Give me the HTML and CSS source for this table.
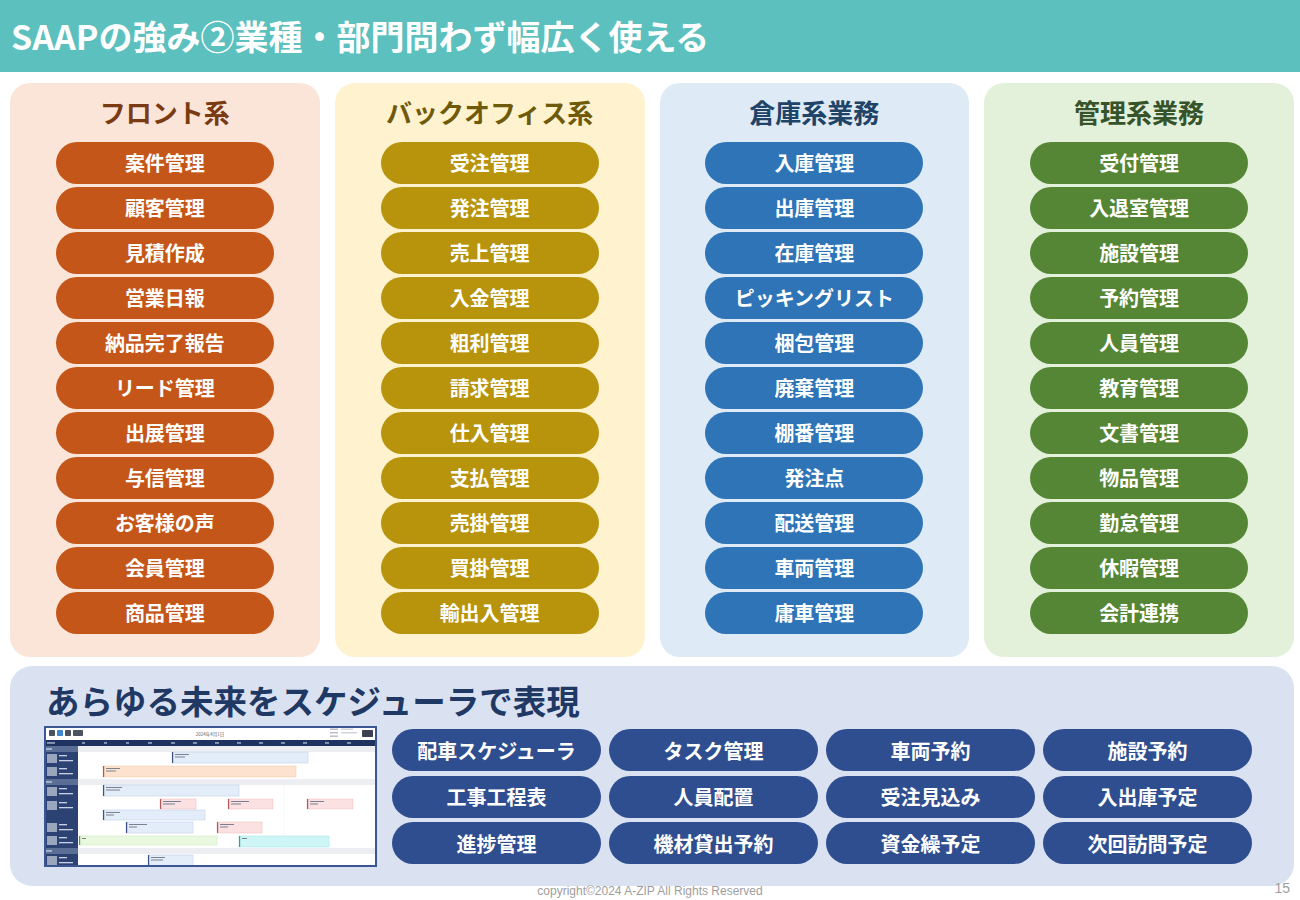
FILE: index.html
```
<!DOCTYPE html>
<html lang="ja">
<head>
<meta charset="utf-8">
<title>SAAPの強み②業種・部門問わず幅広く使える</title>
<link rel="stylesheet" href="styles.css">
</head>
<body>
<div class="page">
  <header class="header"><h1 class="header-title">SAAPの強み②業種・部門問わず幅広く使える</h1></header>

  <section class="columns">
    <div class="col col-front">
      <h2 class="col-title">フロント系</h2>
      <ul class="pills">
        <li class="pill">案件管理</li><li class="pill">顧客管理</li><li class="pill">見積作成</li><li class="pill">営業日報</li><li class="pill">納品完了報告</li><li class="pill">リード管理</li><li class="pill">出展管理</li><li class="pill">与信管理</li><li class="pill">お客様の声</li><li class="pill">会員管理</li><li class="pill">商品管理</li>
      </ul>
    </div>
    <div class="col col-back">
      <h2 class="col-title">バックオフィス系</h2>
      <ul class="pills">
        <li class="pill">受注管理</li><li class="pill">発注管理</li><li class="pill">売上管理</li><li class="pill">入金管理</li><li class="pill">粗利管理</li><li class="pill">請求管理</li><li class="pill">仕入管理</li><li class="pill">支払管理</li><li class="pill">売掛管理</li><li class="pill">買掛管理</li><li class="pill">輸出入管理</li>
      </ul>
    </div>
    <div class="col col-ware">
      <h2 class="col-title">倉庫系業務</h2>
      <ul class="pills">
        <li class="pill">入庫管理</li><li class="pill">出庫管理</li><li class="pill">在庫管理</li><li class="pill">ピッキングリスト</li><li class="pill">梱包管理</li><li class="pill">廃棄管理</li><li class="pill">棚番管理</li><li class="pill">発注点</li><li class="pill">配送管理</li><li class="pill">車両管理</li><li class="pill">庸車管理</li>
      </ul>
    </div>
    <div class="col col-admin">
      <h2 class="col-title">管理系業務</h2>
      <ul class="pills">
        <li class="pill">受付管理</li><li class="pill">入退室管理</li><li class="pill">施設管理</li><li class="pill">予約管理</li><li class="pill">人員管理</li><li class="pill">教育管理</li><li class="pill">文書管理</li><li class="pill">物品管理</li><li class="pill">勤怠管理</li><li class="pill">休暇管理</li><li class="pill">会計連携</li>
      </ul>
    </div>
  </section>

  <section class="sched">
    <h2 class="sched-title">あらゆる未来をスケジューラで表現</h2>
    <div class="sched-row">
      <svg class="shot" width="333" height="141" viewBox="0 0 333 141">
        <rect x="0" y="0" width="333" height="141" fill="#ffffff"/>
        <!-- toolbar -->
        <rect x="5" y="4" width="6" height="6" rx="0.8" fill="#4b5262"/>
        <rect x="13" y="4" width="6" height="6" rx="0.8" fill="#3d86d6"/>
        <rect x="21" y="4" width="6" height="6" rx="0.8" fill="#4b5262"/>
        <rect x="29" y="4" width="10" height="6" rx="0.8" fill="#4b5262"/>
        <text x="166" y="9.5" font-size="4.5" text-anchor="middle" fill="#606060" font-family="Noto Sans CJK JP, sans-serif">2024年4月1日</text>
        <rect x="286" y="2.5" width="8" height="1.4" fill="#b9bcc4"/>
        <rect x="297" y="2.5" width="12" height="1.4" fill="#cfd2d8"/>
        <rect x="286" y="6" width="8" height="1.4" fill="#b9bcc4"/>
        <rect x="297" y="6" width="16" height="1.4" fill="#cfd2d8"/>
        <rect x="286" y="9.5" width="8" height="1.4" fill="#b9bcc4"/>
        <rect x="318" y="4" width="11" height="7" rx="0.8" fill="#3b4150"/>
        <!-- time header -->
        <rect x="0" y="14" width="333" height="6" fill="#1e3360"/>
        <g fill="#b9c4dc">
          <rect x="3" y="16.3" width="8" height="1.3"/>
          <rect x="38" y="16.3" width="3" height="1.3"/><rect x="60" y="16.3" width="3" height="1.3"/><rect x="82" y="16.3" width="3" height="1.3"/><rect x="104" y="16.3" width="4" height="1.3"/><rect x="127" y="16.3" width="4" height="1.3"/><rect x="149" y="16.3" width="4" height="1.3"/><rect x="171" y="16.3" width="4" height="1.3"/><rect x="193" y="16.3" width="4" height="1.3"/><rect x="215" y="16.3" width="4" height="1.3"/><rect x="237" y="16.3" width="4" height="1.3"/><rect x="259" y="16.3" width="4" height="1.3"/><rect x="281" y="16.3" width="4" height="1.3"/><rect x="303" y="16.3" width="4" height="1.3"/>
        </g>
        <!-- group rows -->
        <rect x="34" y="20" width="299" height="6" fill="#eceef2"/>
        <rect x="34" y="53" width="299" height="6" fill="#eceef2"/>
        <rect x="34" y="122" width="299" height="6" fill="#eceef2"/>
        <!-- grid line -->
        <line x1="240" y1="59" x2="240" y2="122" stroke="#e4e6ea" stroke-width="0.5" stroke-dasharray="1.5 1"/>
        <!-- left column -->
        <rect x="0" y="20" width="34" height="121" fill="#2b4273"/>
        <rect x="0" y="20" width="34" height="6" fill="#5a6e96"/>
        <rect x="0" y="53" width="34" height="6" fill="#5a6e96"/>
        <rect x="0" y="122" width="34" height="6" fill="#5a6e96"/>
        <g fill="#9aa6be">
          <rect x="3" y="28" width="10" height="9"/>
          <rect x="3" y="41" width="10" height="9"/>
          <rect x="3" y="61" width="10" height="9"/>
          <rect x="3" y="75" width="10" height="9"/>
          <rect x="3" y="97" width="10" height="9"/>
          <rect x="3" y="110" width="10" height="9"/>
          <rect x="3" y="130" width="10" height="9"/>
        </g>
        <g fill="#c9d2e4">
          <rect x="15" y="29" width="8" height="1.3"/><rect x="15" y="34" width="14" height="1.3"/>
          <rect x="15" y="42" width="8" height="1.3"/><rect x="15" y="47" width="14" height="1.3"/>
          <rect x="15" y="62" width="8" height="1.3"/><rect x="15" y="67" width="14" height="1.3"/>
          <rect x="15" y="76" width="8" height="1.3"/><rect x="15" y="81" width="14" height="1.3"/>
          <rect x="15" y="98" width="8" height="1.3"/><rect x="15" y="103" width="14" height="1.3"/>
          <rect x="15" y="111" width="8" height="1.3"/><rect x="15" y="116" width="14" height="1.3"/>
          <rect x="15" y="131" width="8" height="1.3"/><rect x="15" y="136" width="14" height="1.3"/>
          <rect x="2" y="22.3" width="6" height="1.3"/><rect x="2" y="55.3" width="6" height="1.3"/><rect x="2" y="124.3" width="6" height="1.3"/>
        </g>
        <!-- bars -->
        <g stroke-width="0.5">
          <rect x="128" y="26" width="136" height="11" fill="#e3edf9" stroke="#b8c9e4"/>
          <rect x="59" y="40" width="193" height="11" fill="#fde3cf" stroke="#f1c6a6"/>
          <rect x="59" y="59" width="136" height="11" fill="#e3edf9" stroke="#b8c9e4"/>
          <rect x="116" y="73" width="36" height="10" fill="#fbe1e1" stroke="#e9bcbc"/>
          <rect x="184" y="73" width="45" height="10" fill="#fbe1e1" stroke="#e9bcbc"/>
          <rect x="263" y="73" width="46" height="10" fill="#fbe1e1" stroke="#e9bcbc"/>
          <rect x="59" y="84" width="102" height="10" fill="#e3edf9" stroke="#b8c9e4"/>
          <rect x="82" y="96" width="67" height="11" fill="#e3edf9" stroke="#b8c9e4"/>
          <rect x="173" y="96" width="45" height="11" fill="#fbe1e1" stroke="#e9bcbc"/>
          <rect x="35" y="110" width="138" height="9" fill="#e9f8df" stroke="#c9e8b6"/>
          <rect x="195" y="110" width="90" height="11" fill="#cff6f6" stroke="#9fe3e3"/>
          <rect x="104" y="129" width="45" height="12" fill="#e3edf9" stroke="#b8c9e4"/>
        </g>
        <g>
          <rect x="128" y="26" width="1.2" height="11" fill="#3d5080"/>
          <rect x="59" y="40" width="1.2" height="11" fill="#c0504d"/>
          <rect x="59" y="59" width="1.2" height="11" fill="#3d5080"/>
          <rect x="116" y="73" width="1.2" height="10" fill="#b05a5a"/>
          <rect x="184" y="73" width="1.2" height="10" fill="#b05a5a"/>
          <rect x="263" y="73" width="1.2" height="10" fill="#b05a5a"/>
          <rect x="59" y="84" width="1.2" height="10" fill="#3d5080"/>
          <rect x="82" y="96" width="1.2" height="11" fill="#3d5080"/>
          <rect x="173" y="96" width="1.2" height="11" fill="#b05a5a"/>
          <rect x="35" y="110" width="1.2" height="9" fill="#5aa04a"/>
          <rect x="195" y="110" width="1.2" height="11" fill="#3f9a9a"/>
          <rect x="104" y="129" width="1.2" height="12" fill="#3d5080"/>
        </g>
        <g fill="#7a8090">
          <rect x="131" y="28" width="14" height="1"/><rect x="131" y="30.5" width="10" height="1"/>
          <rect x="62" y="42" width="14" height="1"/><rect x="62" y="44.5" width="10" height="1"/>
          <rect x="62" y="61" width="16" height="1"/><rect x="62" y="63.5" width="14" height="1"/>
          <rect x="119" y="75" width="18" height="1"/><rect x="119" y="77.5" width="12" height="1"/>
          <rect x="187" y="75" width="18" height="1"/><rect x="187" y="77.5" width="10" height="1"/>
          <rect x="266" y="75" width="14" height="1"/><rect x="266" y="77.5" width="8" height="1"/>
          <rect x="62" y="86" width="14" height="1"/><rect x="62" y="88.5" width="8" height="1"/>
          <rect x="85" y="98" width="18" height="1"/><rect x="85" y="100.5" width="8" height="1"/>
          <rect x="176" y="98" width="14" height="1"/><rect x="176" y="100.5" width="8" height="1"/>
          <rect x="38" y="112" width="4" height="1"/>
          <rect x="198" y="112" width="5" height="1"/>
          <rect x="107" y="131" width="14" height="1"/><rect x="107" y="133.5" width="12" height="1"/>
        </g>
        <rect x="1" y="1" width="331" height="139" fill="none" stroke="#3a5794" stroke-width="2"/>
      </svg>
      <ul class="sched-pills">
        <li class="spill">配車スケジューラ</li><li class="spill">タスク管理</li><li class="spill">車両予約</li><li class="spill">施設予約</li>
        <li class="spill">工事工程表</li><li class="spill">人員配置</li><li class="spill">受注見込み</li><li class="spill">入出庫予定</li>
        <li class="spill">進捗管理</li><li class="spill">機材貸出予約</li><li class="spill">資金繰予定</li><li class="spill">次回訪問予定</li>
      </ul>
    </div>
  </section>

  <footer class="footer">
    <span></span>
    <span class="copyright">copyright©2024 A-ZIP All Rights Reserved</span>
    <span class="page-no">15</span>
  </footer>
</div>
</body>
</html>
```
FILE: styles.css
```
* { box-sizing: border-box; }
html, body { margin: 0; padding: 0; }
body {
  background: #ffffff;
  font-family: "Noto Sans CJK JP", "Noto Sans", sans-serif;
}
.page {
  width: 1300px;
  height: 900px;
  overflow: hidden;
  display: flex;
  flex-direction: column;
}
.header {
  height: 72px;
  background: #5bc0be;
  display: flex;
  align-items: center;
  padding-left: 11px;
}
.header-title {
  margin: 0;
  color: #ffffff;
  font-size: 34px;
  font-weight: 700;
  line-height: 1;
}
.columns {
  margin: 11px 6px 0 10px;
  display: grid;
  grid-template-columns: repeat(4, 1fr);
  column-gap: 15px;
}
.col {
  border-radius: 20px;
  padding: 14px 0 23px;
  display: flex;
  flex-direction: column;
  align-items: center;
}
.col-title {
  margin: 0 0 13px;
  font-size: 26px;
  line-height: 30px;
  padding-bottom: 2px;
  font-weight: 700;
}
.pills {
  list-style: none;
  margin: 0;
  padding: 0;
  display: flex;
  flex-direction: column;
  gap: 3px;
}
.pill {
  width: 218px;
  height: 42px;
  border-radius: 21px;
  display: flex;
  align-items: center;
  justify-content: center;
  color: #ffffff;
  font-size: 20px;
  font-weight: 700;
  padding-bottom: 2px;
}
.col-front { background: #fbe5d9; }
.col-front .col-title { color: #7a3a12; }
.col-front .pill { background: #c4561a; }
.col-back { background: #fff2cf; }
.col-back .col-title { color: #6f5a0a; }
.col-back .pill { background: #b8940d; }
.col-ware { background: #deeaf6; }
.col-ware .col-title { color: #1f4468; }
.col-ware .pill { background: #2e74b6; }
.col-admin { background: #e3f0da; }
.col-admin .col-title { color: #37532a; }
.col-admin .pill { background: #558636; }

.sched {
  margin: 9px 6px 0 10px;
  background: #dae2f2;
  border-radius: 22px;
  padding: 14px 0 19px 34px;
}
.sched-title {
  margin: 0;
  font-size: 33.5px;
  line-height: 40px;
  font-weight: 700;
  color: #1f3864;
  padding-left: 2px;
}
.sched-row {
  margin-top: 6px;
  display: flex;
  align-items: flex-start;
  column-gap: 15px;
}
.shot { display: block; flex: none; }
.sched-pills {
  list-style: none;
  margin: 3px 0 0;
  padding: 0;
  display: grid;
  grid-template-columns: repeat(4, 209px);
  column-gap: 8px;
  row-gap: 4.5px;
}
.spill {
  height: 42px;
  border-radius: 21px;
  background: #2f4e8f;
  color: #ffffff;
  font-size: 20px;
  font-weight: 700;
  display: flex;
  align-items: center;
  justify-content: center;
}
.footer {
  margin-top: -2px;
  padding: 0 10px;
  display: grid;
  grid-template-columns: 1fr auto 1fr;
  align-items: center;
  height: 14px;
}
.copyright {
  font-family: "Liberation Sans", Arial, sans-serif;
  font-size: 12px;
  line-height: 14px;
  color: #9e9e9e;
}
.page-no {
  justify-self: end;
  font-family: "Liberation Sans", Arial, sans-serif;
  font-size: 14px;
  line-height: 14px;
  color: #9e9e9e;
  margin-top: -6px;
}
```
